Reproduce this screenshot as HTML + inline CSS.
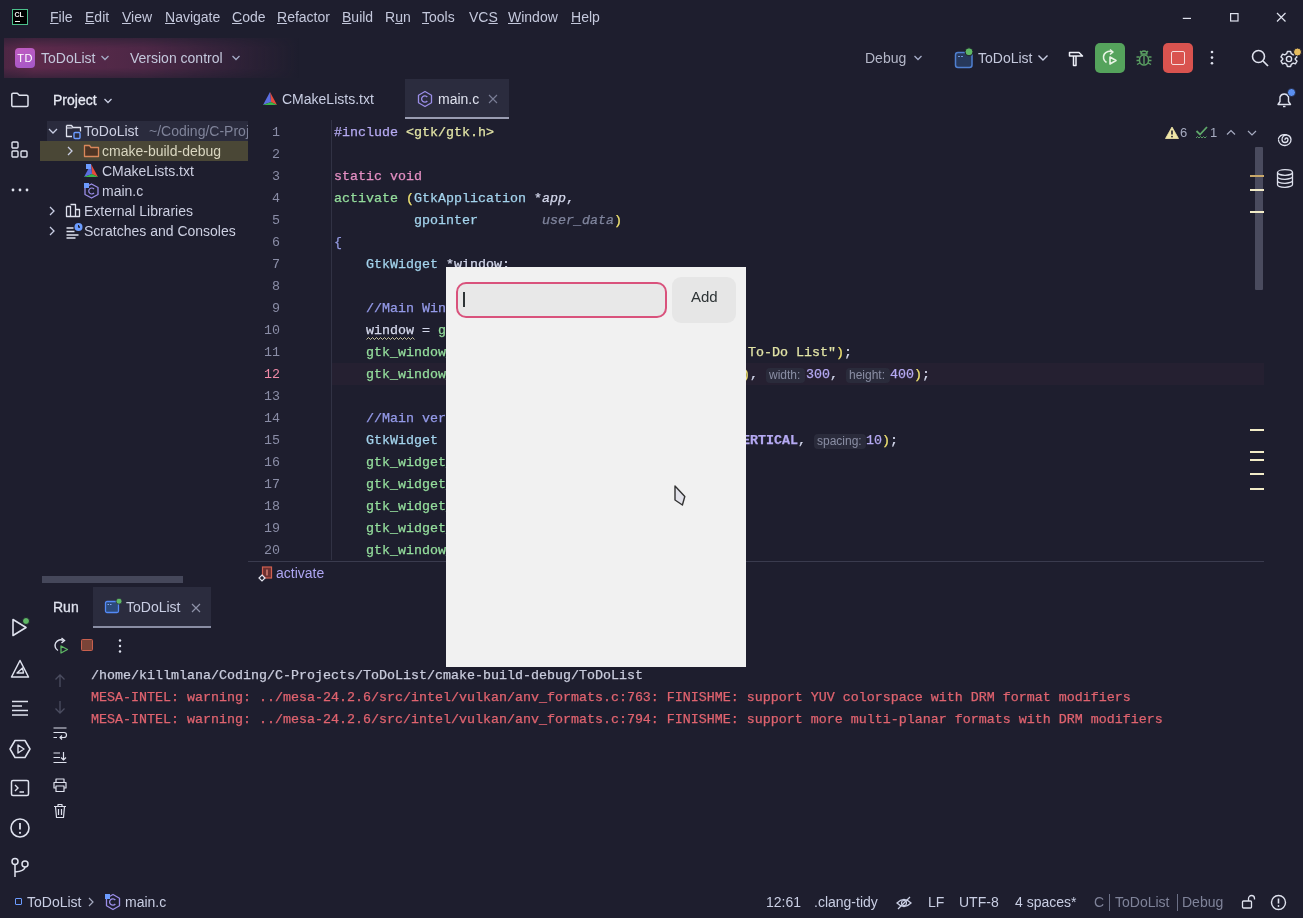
<!DOCTYPE html>
<html><head><meta charset="utf-8">
<style>
*{margin:0;padding:0;box-sizing:border-box}
html,body{width:1303px;height:918px;overflow:hidden;background:#1e1e2e}
body{position:relative;font-family:"Liberation Sans",sans-serif;font-size:14px;color:#c4c8dc}
.a{position:absolute;white-space:pre}
.m{font-family:"Liberation Mono",monospace;font-size:13.33px;-webkit-text-stroke:0.25px currentColor}
.u{text-decoration:underline;text-underline-offset:1px;text-decoration-thickness:1px}
svg{position:absolute;overflow:visible}
</style></head><body><div style="position:absolute;left:0;top:0;width:1303px;height:918px;will-change:transform">

<!-- ===== MENU BAR ===== -->
<div class="a" style="left:12px;top:9px;width:16px;height:16px;background:#000;border:1.3px solid #4cc08c;"></div>
<div class="a" style="left:14.5px;top:10px;font-size:7px;font-weight:bold;color:#f0f0f0;line-height:9px">CL</div>
<div class="a" style="left:15px;top:21px;width:5px;height:1.3px;background:#f0f0f0"></div>

<div id="menu">
<div class="a" style="left:50px;top:9px"><span class="u">F</span>ile</div>
<div class="a" style="left:85px;top:9px"><span class="u">E</span>dit</div>
<div class="a" style="left:122px;top:9px"><span class="u">V</span>iew</div>
<div class="a" style="left:165px;top:9px"><span class="u">N</span>avigate</div>
<div class="a" style="left:232px;top:9px"><span class="u">C</span>ode</div>
<div class="a" style="left:277px;top:9px"><span class="u">R</span>efactor</div>
<div class="a" style="left:342px;top:9px"><span class="u">B</span>uild</div>
<div class="a" style="left:385px;top:9px">R<span class="u">u</span>n</div>
<div class="a" style="left:422px;top:9px"><span class="u">T</span>ools</div>
<div class="a" style="left:469px;top:9px">VC<span class="u">S</span></div>
<div class="a" style="left:508px;top:9px"><span class="u">W</span>indow</div>
<div class="a" style="left:571px;top:9px"><span class="u">H</span>elp</div>
</div>


<!-- ===== TOOLBAR ===== -->
<div class="a" style="left:4px;top:38px;width:320px;height:40px;background:linear-gradient(to right, rgba(135,50,95,0.45) 0px, rgba(135,50,95,0.6) 30px, rgba(125,50,95,0.5) 140px, rgba(100,45,85,0.3) 220px, rgba(30,30,46,0) 295px);-webkit-mask-image:linear-gradient(to bottom, rgba(0,0,0,0.5), #000 25%, #000 75%, rgba(0,0,0,0.5))"></div>
<div class="a" style="left:15px;top:48px;width:20px;height:20px;border-radius:4px;background:linear-gradient(160deg,#c05cc0,#a458c8)"></div>
<div class="a" style="left:15px;top:48px;width:20px;height:20px;line-height:20px;text-align:center;font-size:11px;color:#fff;letter-spacing:0.3px">TD</div>
<div class="a" style="left:41px;top:50px">ToDoList</div>
<svg style="left:100px;top:54px" width="10" height="8"><path d="M1.5 2 L5 5.5 L8.5 2" stroke="#a6adc8" stroke-width="1.3" fill="none"/></svg>
<div class="a" style="left:130px;top:50px">Version control</div>
<svg style="left:231px;top:54px" width="10" height="8"><path d="M1.5 2 L5 5.5 L8.5 2" stroke="#a6adc8" stroke-width="1.3" fill="none"/></svg>

<div class="a" style="left:865px;top:50px;color:#b4b7c8">Debug</div>
<svg style="left:913px;top:54px" width="10" height="8"><path d="M1.5 2 L5 5.5 L8.5 2" stroke="#a6adc8" stroke-width="1.3" fill="none"/></svg>
<svg style="left:954px;top:48px" width="22" height="22"><rect x="1.5" y="4.5" width="16.5" height="15" rx="2.5" fill="#27395c" stroke="#4f7fd0" stroke-width="1.5"/><path d="M4 8.5 h2 M7 8.5 h2" stroke="#6f94d8" stroke-width="1"/><circle cx="15" cy="3.8" r="4" fill="#5fb865" stroke="#1e1e2e" stroke-width="1"/></svg>
<div class="a" style="left:978px;top:50px">ToDoList</div>
<svg style="left:1037px;top:54px" width="12" height="8"><path d="M1.5 1.5 L6 6 L10.5 1.5" stroke="#c9cee3" stroke-width="1.4" fill="none"/></svg>
<svg style="left:1066px;top:49px" width="20" height="20"><path d="M3.5 3.5 H13 L16.5 7 H3.5 Z" stroke="#eef0f8" stroke-width="1.5" fill="none" stroke-linejoin="round"/><path d="M7.5 7 V16.5 H10 V7" stroke="#eef0f8" stroke-width="1.5" fill="none" stroke-linejoin="round"/></svg>
<div class="a" style="left:1095px;top:43px;width:30px;height:30px;border-radius:5px;background:#55a35c"></div>
<svg style="left:1099px;top:47px" width="22" height="22"><path d="M13.5 5 A6 6 0 1 0 7.5 15.5" stroke="#e8f4e4" stroke-width="1.6" fill="none"/><path d="M11 2.5 L14 5 L11 7.5" stroke="#e8f4e4" stroke-width="1.6" fill="none" stroke-linejoin="round"/><path d="M11 10 L17 13.5 L11 17 Z" stroke="#e8f4e4" stroke-width="1.6" fill="none" stroke-linejoin="round"/></svg>
<svg style="left:1134px;top:48px" width="20" height="20"><path d="M7 6 A3 3 0 0 1 13 6 Z" stroke="#5a9e62" stroke-width="1.4" fill="none" stroke-linejoin="round"/><rect x="5.5" y="7" width="9" height="10" rx="4.5" stroke="#5a9e62" stroke-width="1.5" fill="none"/><path d="M10 8 V16 M2.5 9 H5.5 M14.5 9 H17.5 M2.5 12.5 H5.5 M14.5 12.5 H17.5 M3 16.5 L5.8 15 M17 16.5 L14.2 15 M6 3 L7.5 4.5 M14 3 L12.5 4.5" stroke="#5a9e62" stroke-width="1.4" fill="none"/></svg>
<div class="a" style="left:1163px;top:43px;width:30px;height:30px;border-radius:5px;background:#d9534f"></div>
<div class="a" style="left:1171px;top:51px;width:14px;height:14px;border-radius:2px;border:1.6px solid #f6dcdc"></div>
<svg style="left:1208px;top:49px" width="8" height="18"><circle cx="4" cy="3" r="1.3" fill="#dfe2ee"/><circle cx="4" cy="8.6" r="1.3" fill="#dfe2ee"/><circle cx="4" cy="14.2" r="1.3" fill="#dfe2ee"/></svg>
<svg style="left:1250px;top:48px" width="20" height="20"><circle cx="8.5" cy="8.5" r="6" stroke="#dfe2ee" stroke-width="1.6" fill="none"/><path d="M13 13 L18 18" stroke="#dfe2ee" stroke-width="1.7"/></svg>
<svg style="left:1280px;top:49px" width="22" height="22"><g transform="translate(9,10)" stroke="#dfe2ee" stroke-width="1.4" fill="none" stroke-linejoin="round"><path d="M-1.6 -7.5 H1.6 L2.3 -5.3 L4.2 -4.2 L6.4 -4.9 L8 -2.1 L6.3 -0.6 V0.6 L8 2.1 L6.4 4.9 L4.2 4.2 L2.3 5.3 L1.6 7.5 H-1.6 L-2.3 5.3 L-4.2 4.2 L-6.4 4.9 L-8 2.1 L-6.3 0.6 V-0.6 L-8 -2.1 L-6.4 -4.9 L-4.2 -4.2 L-2.3 -5.3 Z"/><circle r="2.6"/></g><circle cx="17.5" cy="3" r="4" fill="#e7bd5e" stroke="#1e1e2e" stroke-width="1"/></svg>

<!-- window controls -->
<svg style="left:1182px;top:10px" width="14" height="14"><path d="M0.8 8.4 H9" stroke="#dfe2ee" stroke-width="1.2"/></svg>
<svg style="left:1229px;top:12px" width="14" height="14"><rect x="1.6" y="1.6" width="7.4" height="7.4" stroke="#dfe2ee" stroke-width="1.2" fill="none"/></svg>
<svg style="left:1276px;top:12px" width="14" height="14"><path d="M1 1 L9.5 9.5 M9.5 1 L1 9.5" stroke="#dfe2ee" stroke-width="1.2"/></svg>


<!-- ===== LEFT STRIP ===== -->
<svg style="left:10px;top:90px" width="20" height="20"><path d="M1.8 4.5 a1.3 1.3 0 0 1 1.3-1.3 h4.2 l2 2 h7.4 a1.3 1.3 0 0 1 1.3 1.3 v8.8 a1.3 1.3 0 0 1 -1.3 1.3 h-13.6 a1.3 1.3 0 0 1 -1.3-1.3 z" stroke="#dfe2ee" stroke-width="1.5" fill="none" stroke-linejoin="round"/></svg>
<svg style="left:10px;top:140px" width="20" height="20"><rect x="2" y="2" width="6" height="6" rx="1" stroke="#dfe2ee" stroke-width="1.4" fill="none"/><rect x="2" y="11" width="6" height="6" rx="1" stroke="#dfe2ee" stroke-width="1.4" fill="none"/><rect x="11" y="11" width="6" height="6" rx="1" stroke="#dfe2ee" stroke-width="1.4" fill="none"/></svg>
<svg style="left:10px;top:180px" width="20" height="20"><circle cx="3" cy="10" r="1.4" fill="#dfe2ee"/><circle cx="10" cy="10" r="1.4" fill="#dfe2ee"/><circle cx="17" cy="10" r="1.4" fill="#dfe2ee"/></svg>

<svg style="left:10px;top:616px" width="22" height="22"><path d="M3 3.5 L16 11.5 L3 19.5 Z" stroke="#dfe2ee" stroke-width="1.6" fill="none" stroke-linejoin="round"/><circle cx="16" cy="5" r="3.5" fill="#5fb865" stroke="#1e1e2e" stroke-width="1"/></svg>
<svg style="left:10px;top:659px" width="20" height="20"><path d="M10 1.5 L18.5 18 H1.5 Z" stroke="#dfe2ee" stroke-width="1.5" fill="none" stroke-linejoin="round"/><path d="M12.5 9 L7 14 H13.5 Z" stroke="#dfe2ee" stroke-width="1.3" fill="none" stroke-linejoin="round"/></svg>
<svg style="left:10px;top:698px" width="20" height="20"><path d="M2 3.5 H18 M2 8 H12 M2 12.5 H18 M2 17 H18" stroke="#dfe2ee" stroke-width="1.5"/></svg>
<svg style="left:9px;top:738px" width="22" height="22"><path d="M6 2.5 H16 L21 11 L16 19.5 H6 L1 11 Z" stroke="#dfe2ee" stroke-width="1.5" fill="none" stroke-linejoin="round"/><path d="M9 7 L15 11 L9 15 Z" stroke="#dfe2ee" stroke-width="1.4" fill="none" stroke-linejoin="round"/></svg>
<svg style="left:10px;top:778px" width="20" height="20"><rect x="1.5" y="2.5" width="17" height="15" rx="1.5" stroke="#dfe2ee" stroke-width="1.5" fill="none"/><path d="M5 7 L8 10 L5 13 M9.5 14 H14" stroke="#dfe2ee" stroke-width="1.4" fill="none"/></svg>
<svg style="left:9px;top:817px" width="22" height="22"><circle cx="11" cy="11" r="9" stroke="#dfe2ee" stroke-width="1.6" fill="none"/><path d="M11 6 V12.5" stroke="#dfe2ee" stroke-width="1.8"/><circle cx="11" cy="15.8" r="1.1" fill="#dfe2ee"/></svg>
<svg style="left:10px;top:857px" width="20" height="22"><circle cx="5" cy="4.5" r="3" stroke="#dfe2ee" stroke-width="1.5" fill="none"/><circle cx="15" cy="7" r="3" stroke="#dfe2ee" stroke-width="1.5" fill="none"/><path d="M5 7.5 V20 M15 10 Q15 14 5 15" stroke="#dfe2ee" stroke-width="1.5" fill="none"/></svg>

<!-- ===== PROJECT PANEL ===== -->
<div class="a" style="left:53px;top:92px;color:#e6e8f2;-webkit-text-stroke:0.3px #e6e8f2">Project</div>
<svg style="left:103px;top:97px" width="10" height="8"><path d="M1.5 2 L5 5.5 L8.5 2" stroke="#c9cee3" stroke-width="1.3" fill="none"/></svg>

<div class="a" style="left:47px;top:121px;width:201px;height:20px;background:#2a2b3d"></div>
<div class="a" style="left:40px;top:141px;width:208px;height:20px;background:#4a4736"></div>

<svg style="left:47px;top:125px" width="12" height="12"><path d="M2 4 L6 8 L10 4" stroke="#c9cee3" stroke-width="1.3" fill="none"/></svg>
<svg style="left:65px;top:123px" width="18" height="18"><path d="M1.5 2.5 h5 l1.5 2 h7.5 v4 M1.5 2.5 v11 h5.5" stroke="#dfe2ee" stroke-width="1.3" fill="none" stroke-linejoin="round"/><path d="M1.5 5 h6" stroke="#dfe2ee" stroke-width="1.1"/><rect x="9" y="9.5" width="6" height="6" rx="1" stroke="#6c9cff" stroke-width="1.4" fill="none"/></svg>
<div class="a" style="left:84px;top:123px;color:#cdd0e2">ToDoList</div>
<div class="a" style="left:149px;top:121px;width:99px;height:20px;overflow:hidden"><div class="a" style="left:0;top:2px;color:#7f8399">~/Coding/C-Projects/ToDoList</div></div>

<svg style="left:64px;top:145px" width="12" height="12"><path d="M4 2 L8 6 L4 10" stroke="#c9cee3" stroke-width="1.3" fill="none"/></svg>
<svg style="left:83px;top:143px" width="18" height="16"><path d="M1.5 2.5 h5 l1.5 2 h7.5 v9 h-14 z" stroke="#d9875a" stroke-width="1.3" fill="#4d3424" stroke-linejoin="round"/></svg>
<div class="a" style="left:102px;top:143px;color:#d9d6c0">cmake-build-debug</div>

<svg style="left:83px;top:163px" width="18" height="16"><path d="M8 1 L15 14 L9 11 Z" fill="#e74b3c"/><path d="M8 1 L1 14 L9 11 Z" fill="#5b6ee1"/><path d="M1 14 L15 14 L9 11 Z" fill="#3cb54a"/><rect x="3" y="1" width="5" height="5" fill="#6c9cff"/></svg>
<div class="a" style="left:102px;top:163px;color:#cdd0e2">CMakeLists.txt</div>

<svg style="left:83px;top:182px" width="18" height="18"><path d="M8.5 2 L15 5.5 V12.5 L8.5 16 L2 12.5 V5.5 Z" stroke="#9b8ee8" stroke-width="1.3" fill="none" stroke-linejoin="round"/><path d="M11 7 A3 3 0 1 0 11 11" stroke="#9b8ee8" stroke-width="1.2" fill="none"/><rect x="1" y="1" width="5" height="5" fill="#6c9cff"/></svg>
<div class="a" style="left:102px;top:183px;color:#cdd0e2">main.c</div>

<svg style="left:46px;top:205px" width="12" height="12"><path d="M4 2 L8 6 L4 10" stroke="#c9cee3" stroke-width="1.3" fill="none"/></svg>
<svg style="left:65px;top:203px" width="18" height="16"><path d="M1.5 3.5 v10 h13 v-7 h-4 M1.5 3.5 h4 v10 M5.5 1.5 h5 v12" stroke="#dfe2ee" stroke-width="1.3" fill="none" stroke-linejoin="round"/></svg>
<div class="a" style="left:84px;top:203px;color:#cdd0e2">External Libraries</div>

<svg style="left:46px;top:225px" width="12" height="12"><path d="M4 2 L8 6 L4 10" stroke="#c9cee3" stroke-width="1.3" fill="none"/></svg>
<svg style="left:65px;top:222px" width="18" height="18"><path d="M1.5 6 h7 M1.5 9.5 h8 M1.5 13 h12 M1.5 16 h9" stroke="#dfe2ee" stroke-width="1.3"/><circle cx="13.5" cy="5" r="4" fill="#6c9cff"/><path d="M13.5 3 v2.3 h1.5" stroke="#1e1e2e" stroke-width="1"/></svg>
<div class="a" style="left:84px;top:223px;color:#cdd0e2">Scratches and Consoles</div>

<div class="a" style="left:42px;top:576px;width:141px;height:7px;background:#45475a;border-radius:0"></div>


<!-- ===== EDITOR TABS ===== -->
<svg style="left:262px;top:91px" width="16" height="16"><path d="M8 1 L15 14 L9 11 Z" fill="#e74b3c"/><path d="M8 1 L1 14 L9 11 Z" fill="#5b6ee1"/><path d="M1 14 L15 14 L9 11 Z" fill="#3cb54a"/></svg>
<div class="a" style="left:282px;top:91px;color:#c9cee3">CMakeLists.txt</div>
<div class="a" style="left:405px;top:79px;width:104px;height:40px;background:#2b2c3e"></div>
<div class="a" style="left:405px;top:117px;width:104px;height:2px;background:#9a9db2"></div>
<svg style="left:416px;top:90px" width="18" height="18"><path d="M9 1.5 L15.5 5.2 V12.8 L9 16.5 L2.5 12.8 V5.2 Z" stroke="#9b8ee8" stroke-width="1.3" fill="none" stroke-linejoin="round"/><path d="M11.3 7 A3.2 3.2 0 1 0 11.3 11" stroke="#9b8ee8" stroke-width="1.3" fill="none"/></svg>
<div class="a" style="left:438px;top:91px;color:#dfe2ee">main.c</div>
<svg style="left:487px;top:93px" width="12" height="12"><path d="M2 2 L10 10 M10 2 L2 10" stroke="#7a7e96" stroke-width="1.1"/></svg>

<!-- ===== EDITOR ===== -->
<div class="a" style="left:332px;top:363px;width:932px;height:22px;background:rgba(60,40,60,0.25)"></div>
<div class="a" style="left:331px;top:120px;width:1px;height:440px;background:#313244"></div>
<div class="a" style="left:248px;top:561px;width:1016px;height:1px;background:#3a3b4e"></div>
<div id="gutter" style="position:absolute;left:0;top:2px">
<div class="a m" style="left:230px;top:120px;width:50px;text-align:right;line-height:22px;-webkit-text-stroke:0;color:#8a8da6">1</div>
<div class="a m" style="left:230px;top:142px;width:50px;text-align:right;line-height:22px;-webkit-text-stroke:0;color:#8a8da6">2</div>
<div class="a m" style="left:230px;top:164px;width:50px;text-align:right;line-height:22px;-webkit-text-stroke:0;color:#8a8da6">3</div>
<div class="a m" style="left:230px;top:186px;width:50px;text-align:right;line-height:22px;-webkit-text-stroke:0;color:#8a8da6">4</div>
<div class="a m" style="left:230px;top:208px;width:50px;text-align:right;line-height:22px;-webkit-text-stroke:0;color:#8a8da6">5</div>
<div class="a m" style="left:230px;top:230px;width:50px;text-align:right;line-height:22px;-webkit-text-stroke:0;color:#8a8da6">6</div>
<div class="a m" style="left:230px;top:252px;width:50px;text-align:right;line-height:22px;-webkit-text-stroke:0;color:#8a8da6">7</div>
<div class="a m" style="left:230px;top:274px;width:50px;text-align:right;line-height:22px;-webkit-text-stroke:0;color:#8a8da6">8</div>
<div class="a m" style="left:230px;top:296px;width:50px;text-align:right;line-height:22px;-webkit-text-stroke:0;color:#8a8da6">9</div>
<div class="a m" style="left:230px;top:318px;width:50px;text-align:right;line-height:22px;-webkit-text-stroke:0;color:#8a8da6">10</div>
<div class="a m" style="left:230px;top:340px;width:50px;text-align:right;line-height:22px;-webkit-text-stroke:0;color:#8a8da6">11</div>
<div class="a m" style="left:230px;top:362px;width:50px;text-align:right;line-height:22px;-webkit-text-stroke:0;color:#f38ba8">12</div>
<div class="a m" style="left:230px;top:384px;width:50px;text-align:right;line-height:22px;-webkit-text-stroke:0;color:#8a8da6">13</div>
<div class="a m" style="left:230px;top:406px;width:50px;text-align:right;line-height:22px;-webkit-text-stroke:0;color:#8a8da6">14</div>
<div class="a m" style="left:230px;top:428px;width:50px;text-align:right;line-height:22px;-webkit-text-stroke:0;color:#8a8da6">15</div>
<div class="a m" style="left:230px;top:450px;width:50px;text-align:right;line-height:22px;-webkit-text-stroke:0;color:#8a8da6">16</div>
<div class="a m" style="left:230px;top:472px;width:50px;text-align:right;line-height:22px;-webkit-text-stroke:0;color:#8a8da6">17</div>
<div class="a m" style="left:230px;top:494px;width:50px;text-align:right;line-height:22px;-webkit-text-stroke:0;color:#8a8da6">18</div>
<div class="a m" style="left:230px;top:516px;width:50px;text-align:right;line-height:22px;-webkit-text-stroke:0;color:#8a8da6">19</div>
<div class="a m" style="left:230px;top:538px;width:50px;text-align:right;line-height:22px;-webkit-text-stroke:0;color:#8a8da6">20</div>
</div>

<div id="code" style="position:absolute;left:0;top:2px">
<div class="a m" style="left:334px;top:120px;line-height:22px"><span style="color:#b4a9f0;">#include</span><span style="color:#d4d8ec;"> </span><span style="color:#e2e4a6;">&lt;gtk/gtk.h&gt;</span></div>
<div class="a m" style="left:334px;top:164px;line-height:22px"><span style="color:#e48fc3;">static</span><span style="color:#d4d8ec;"> </span><span style="color:#e48fc3;">void</span></div>
<div class="a m" style="left:334px;top:186px;line-height:22px"><span style="color:#94dd9c;">activate</span><span style="color:#d4d8ec;"> </span><span style="color:#f0e372;">(</span><span style="color:#a3d3ec;">GtkApplication</span><span style="color:#d4d8ec;"> *</span><span style="color:#d4d8ec;font-style:italic">app</span><span style="color:#d4d8ec;">,</span></div>
<div class="a m" style="left:334px;top:208px;line-height:22px"><span style="color:#d4d8ec;">          </span><span style="color:#a3d3ec;">gpointer</span><span style="color:#d4d8ec;">        </span><span style="color:#7f849c;font-style:italic">user_data</span><span style="color:#f0e372;">)</span></div>
<div class="a m" style="left:334px;top:230px;line-height:22px"><span style="color:#9399e0;">{</span></div>
<div class="a m" style="left:334px;top:252px;line-height:22px"><span style="color:#d4d8ec;">    </span><span style="color:#a3d3ec;">GtkWidget</span><span style="color:#d4d8ec;"> *window;</span></div>
<div class="a m" style="left:334px;top:296px;line-height:22px"><span style="color:#d4d8ec;">    </span><span style="color:#959bea;">//Main Window</span></div>
<div class="a m" style="left:334px;top:318px;line-height:22px"><span style="color:#d4d8ec;">    </span><span style="color:#d4d8ec;">window</span><span style="color:#d4d8ec;"> = </span><span style="color:#94dd9c;">gtk_application_window_new</span></div>
<div class="a m" style="left:334px;top:340px;line-height:22px"><span style="color:#d4d8ec;">    </span><span style="color:#94dd9c;">gtk_window_set_title</span></div>
<div class="a m" style="left:334px;top:362px;line-height:22px"><span style="color:#d4d8ec;">    </span><span style="color:#94dd9c;">gtk_window_set_default_size</span></div>
<div class="a m" style="left:334px;top:406px;line-height:22px"><span style="color:#d4d8ec;">    </span><span style="color:#959bea;">//Main vertical box</span></div>
<div class="a m" style="left:334px;top:428px;line-height:22px"><span style="color:#d4d8ec;">    </span><span style="color:#a3d3ec;">GtkWidget</span><span style="color:#d4d8ec;"> *vbox = gtk_box_new</span></div>
<div class="a m" style="left:334px;top:450px;line-height:22px"><span style="color:#d4d8ec;">    </span><span style="color:#94dd9c;">gtk_widget_set_margin_top</span></div>
<div class="a m" style="left:334px;top:472px;line-height:22px"><span style="color:#d4d8ec;">    </span><span style="color:#94dd9c;">gtk_widget_set_margin_bottom</span></div>
<div class="a m" style="left:334px;top:494px;line-height:22px"><span style="color:#d4d8ec;">    </span><span style="color:#94dd9c;">gtk_widget_set_margin_start</span></div>
<div class="a m" style="left:334px;top:516px;line-height:22px"><span style="color:#d4d8ec;">    </span><span style="color:#94dd9c;">gtk_widget_set_margin_end</span></div>
<div class="a m" style="left:334px;top:538px;line-height:22px"><span style="color:#d4d8ec;">    </span><span style="color:#94dd9c;">gtk_window_set_child</span></div>
<div class="a m" style="left:748px;top:340px;line-height:22px"><span style="color:#e2e4a6;">To-Do List</span><span style="color:#e2e4a6;">"</span><span style="color:#f0e372;">)</span><span style="color:#d4d8ec;">;</span></div>
<div class="a m" style="left:742px;top:362px;line-height:22px"><span style="color:#f0e372;">)</span><span style="color:#d4d8ec;">, </span></div>
<div class="a" style="left:766px;top:366px;width:39px;height:15px;background:#2a2b3b;border-radius:4px"></div>
<div class="a" style="left:769px;top:365px;font-size:12px;color:#8a8ea4;line-height:16px">width:</div>
<div class="a m" style="left:806px;top:362px;line-height:22px"><span style="color:#b5a9f2;">300</span><span style="color:#d4d8ec;">, </span></div>
<div class="a" style="left:846px;top:366px;width:44px;height:15px;background:#2a2b3b;border-radius:4px"></div>
<div class="a" style="left:849px;top:365px;font-size:12px;color:#8a8ea4;line-height:16px">height:</div>
<div class="a m" style="left:890px;top:362px;line-height:22px"><span style="color:#b5a9f2;">400</span><span style="color:#f0e372;">)</span><span style="color:#d4d8ec;">;</span></div>
<div class="a m" style="left:742px;top:428px;line-height:22px"><span style="color:#b5a9f2;font-weight:bold">ERTICAL</span><span style="color:#d4d8ec;">, </span></div>
<div class="a" style="left:814px;top:432px;width:52px;height:15px;background:#2a2b3b;border-radius:4px"></div>
<div class="a" style="left:817px;top:431px;font-size:12px;color:#8a8ea4;line-height:16px">spacing:</div>
<div class="a m" style="left:866px;top:428px;line-height:22px"><span style="color:#b5a9f2;">10</span><span style="color:#f0e372;">)</span><span style="color:#d4d8ec;">;</span></div>
</div>


<!-- ===== RIGHT EDITOR GUTTER / STRIP ===== -->
<svg style="left:1165px;top:126px" width="14" height="13"><path d="M7 1 L13.5 12.5 H0.5 Z" fill="#f0e6a8" stroke="#f0e6a8" stroke-width="0.8" stroke-linejoin="round"/><path d="M7 4.5 V8.5" stroke="#1e1e2e" stroke-width="1.6"/><circle cx="7" cy="10.6" r="0.9" fill="#1e1e2e"/></svg>
<div class="a" style="left:1180px;top:125px;font-size:13px;color:#a6abc0">6</div>
<svg style="left:1195px;top:125px" width="14" height="16"><path d="M1.5 6 L5 9.5 L12 2" stroke="#5fa86a" stroke-width="1.8" fill="none"/><path d="M1 13 l1.5 -1.5 1.5 1.5 1.5 -1.5 1.5 1.5 1.5 -1.5 1.5 1.5 1.5 -1.5" stroke="#5fa86a" stroke-width="0.9" fill="none"/></svg>
<div class="a" style="left:1210px;top:125px;font-size:13px;color:#a6abc0">1</div>
<svg style="left:1225px;top:128px" width="12" height="10"><path d="M2 6.5 L6 2.5 L10 6.5" stroke="#a6abc0" stroke-width="1.2" fill="none"/></svg>
<svg style="left:1246px;top:128px" width="12" height="10"><path d="M2 3 L6 7 L10 3" stroke="#a6abc0" stroke-width="1.2" fill="none"/></svg>

<div class="a" style="left:1255px;top:147px;width:8px;height:143px;background:#4a4b5e;border-radius:1px"></div>
<div class="a" style="left:1250px;top:175px;width:14px;height:2px;background:#c9a86a"></div>
<div class="a" style="left:1250px;top:189px;width:14px;height:2px;background:#f2ecc8"></div>
<div class="a" style="left:1250px;top:211px;width:14px;height:2px;background:#f2ecc8"></div>
<div class="a" style="left:1250px;top:429px;width:14px;height:2px;background:#f2ecc8"></div>
<div class="a" style="left:1250px;top:451px;width:14px;height:2px;background:#f2ecc8"></div>
<div class="a" style="left:1250px;top:459px;width:14px;height:2px;background:#f2ecc8"></div>
<div class="a" style="left:1250px;top:473px;width:14px;height:2px;background:#f2ecc8"></div>
<div class="a" style="left:1250px;top:488px;width:14px;height:2px;background:#f2ecc8"></div>

<svg style="left:1275px;top:89px" width="20" height="20"><path d="M3 15.5 H15.5 L13.5 12.5 V8 A4.5 4.5 0 0 0 5 8 V12.5 Z" stroke="#dfe2ee" stroke-width="1.4" fill="none" stroke-linejoin="round"/><path d="M8 17.5 h2.5" stroke="#dfe2ee" stroke-width="1.4"/><circle cx="16.5" cy="3.5" r="4" fill="#5b8ff0" stroke="#1e1e2e" stroke-width="0.8"/></svg>
<svg style="left:1275px;top:129px" width="20" height="20"><path d="M10 10.5 a1.5 1.5 0 0 1 3 0 a3 3 0 0 1 -6 0 a4.5 4.5 0 0 1 9 0 a6 5.5 0 0 1 -12.5 0.5 M16 10.5 a6.5 6 0 0 0 -12.5 -1" stroke="#dfe2ee" stroke-width="1.3" fill="none" stroke-linecap="round"/></svg>
<svg style="left:1275px;top:168px" width="20" height="22"><ellipse cx="10" cy="4.5" rx="7.5" ry="2.8" stroke="#dfe2ee" stroke-width="1.3" fill="none"/><path d="M2.5 4.5 V16.5 A7.5 2.8 0 0 0 17.5 16.5 V4.5 M2.5 8.5 A7.5 2.8 0 0 0 17.5 8.5 M2.5 12.5 A7.5 2.8 0 0 0 17.5 12.5" stroke="#dfe2ee" stroke-width="1.3" fill="none"/></svg>

<svg style="left:366px;top:337px" width="50" height="4"><polyline points="0.5,2.5 2.5,0.5 4.5,2.5 6.5,0.5 8.5,2.5 10.5,0.5 12.5,2.5 14.5,0.5 16.5,2.5 18.5,0.5 20.5,2.5 22.5,0.5 24.5,2.5 26.5,0.5 28.5,2.5 30.5,0.5 32.5,2.5 34.5,0.5 36.5,2.5 38.5,0.5 40.5,2.5 42.5,0.5 44.5,2.5 46.5,0.5 48.5,2.5" stroke="#ddd9ac" stroke-width="0.9" fill="none"/></svg>
<!-- breadcrumb -->
<svg style="left:258px;top:565px" width="16" height="16"><rect x="4.5" y="2" width="9" height="11" fill="#6b3030" stroke="#d06050" stroke-width="1.2"/><path d="M9 4.5 v6" stroke="#e89080" stroke-width="1.2"/><path d="M4 10 L7 13 L4 16 L1 13 Z" fill="#1e1e2e" stroke="#e6e6f0" stroke-width="1.2"/></svg>
<div class="a" style="left:276px;top:565px;color:#aea6f2;font-size:14px">activate</div>

<!-- ===== RUN PANEL ===== -->
<div class="a" style="left:53px;top:599px;color:#dfe2ee;-webkit-text-stroke:0.3px #dfe2ee">Run</div>
<div class="a" style="left:93px;top:587px;width:118px;height:41px;background:#2b2c3e"></div>
<div class="a" style="left:93px;top:626px;width:118px;height:2px;background:#8a8ea4"></div>
<svg style="left:104px;top:598px" width="20" height="18"><rect x="1.5" y="3.5" width="13" height="11" rx="1.5" fill="#2c4a7a" stroke="#548af7" stroke-width="1.3"/><path d="M3.5 6.5 h1.5 M6 6.5 h1.5" stroke="#8fb4ff" stroke-width="0.9"/><circle cx="15" cy="3.2" r="3" fill="#5fb865" stroke="#2b2c3e" stroke-width="0.8"/></svg>
<div class="a" style="left:126px;top:599px;color:#c9cee3">ToDoList</div>
<svg style="left:190px;top:602px" width="12" height="12"><path d="M2 2 L10 10 M10 2 L2 10" stroke="#8e92a8" stroke-width="1.2"/></svg>

<svg style="left:52px;top:637px" width="18" height="18"><path d="M11.5 3.5 A5.5 5.5 0 1 0 6 13.5" stroke="#dfe2ee" stroke-width="1.4" fill="none"/><path d="M9.5 1 L12.5 3.5 L9.5 6" stroke="#dfe2ee" stroke-width="1.4" fill="none"/><path d="M9 9 L15.5 12.5 L9 16 Z" stroke="#5fb865" stroke-width="1.3" fill="none" stroke-linejoin="round"/></svg>
<div class="a" style="left:81px;top:639px;width:12px;height:12px;background:#7a4438;border:1.3px solid #c8604e;border-radius:1.5px"></div>
<svg style="left:116px;top:638px" width="8" height="16"><circle cx="4" cy="2.5" r="1.2" fill="#dfe2ee"/><circle cx="4" cy="8" r="1.2" fill="#dfe2ee"/><circle cx="4" cy="13.5" r="1.2" fill="#dfe2ee"/></svg>

<svg style="left:53px;top:673px" width="14" height="16"><path d="M7 2 V14 M2.5 6.5 L7 2 L11.5 6.5" stroke="#4b4d60" stroke-width="1.3" fill="none"/></svg>
<svg style="left:53px;top:699px" width="14" height="16"><path d="M7 2 V14 M2.5 9.5 L7 14 L11.5 9.5" stroke="#4b4d60" stroke-width="1.3" fill="none"/></svg>
<svg style="left:52px;top:725px" width="16" height="16"><path d="M1.5 3 H14.5 M1.5 7.5 H12 A2.5 2.5 0 0 1 12 12.5 H8 M1.5 12.5 H5 M10 10.5 L8 12.5 L10 14.5" stroke="#dfe2ee" stroke-width="1.2" fill="none"/></svg>
<svg style="left:52px;top:750px" width="16" height="16"><path d="M1.5 3 H8 M1.5 7.5 H8 M1.5 12.5 H14.5 M11.5 2 V10 M9 7.5 L11.5 10 L14 7.5" stroke="#dfe2ee" stroke-width="1.2" fill="none"/></svg>
<svg style="left:52px;top:777px" width="16" height="16"><path d="M4 5.5 V2 H12 V5.5 M4 11 H2 V5.5 H14 V11 H12 M4 9 H12 V14.5 H4 Z" stroke="#dfe2ee" stroke-width="1.2" fill="none" stroke-linejoin="round"/></svg>
<svg style="left:52px;top:803px" width="16" height="16"><path d="M2 3.5 H14 M6 3.5 V1.5 H10 V3.5 M3.5 3.5 L4.5 14.5 H11.5 L12.5 3.5 M6.5 6 V12 M9.5 6 V12" stroke="#dfe2ee" stroke-width="1.2" fill="none" stroke-linejoin="round"/></svg>

<div class="a m" style="left:91px;top:665px;line-height:22px;color:#c9ccdd">/home/killmlana/Coding/C-Projects/ToDoList/cmake-build-debug/ToDoList</div>
<div class="a m" style="left:91px;top:687px;line-height:22px;color:#e0636f">MESA-INTEL: warning: ../mesa-24.2.6/src/intel/vulkan/anv_formats.c:763: FINISHME: support YUV colorspace with DRM format modifiers</div>
<div class="a m" style="left:91px;top:709px;line-height:22px;color:#e0636f">MESA-INTEL: warning: ../mesa-24.2.6/src/intel/vulkan/anv_formats.c:794: FINISHME: support more multi-planar formats with DRM modifiers</div>

<!-- ===== STATUS BAR ===== -->
<div class="a" style="left:15px;top:898px;width:7px;height:7px;border:1.3px solid #6c9cff;border-radius:1px"></div>
<div class="a" style="left:27px;top:894px;color:#c9cee3">ToDoList</div>
<svg style="left:86px;top:896px" width="10" height="12"><path d="M3 2 L7 6 L3 10" stroke="#a6abc0" stroke-width="1.2" fill="none"/></svg>
<svg style="left:104px;top:893px" width="18" height="18"><path d="M9 1.5 L15.5 5.2 V12.8 L9 16.5 L2.5 12.8 V5.2 Z" stroke="#9b8ee8" stroke-width="1.3" fill="none" stroke-linejoin="round"/><path d="M11.3 7 A3.2 3.2 0 1 0 11.3 11" stroke="#9b8ee8" stroke-width="1.3" fill="none"/><rect x="1" y="1" width="5" height="5" fill="#6c9cff"/></svg>
<div class="a" style="left:125px;top:894px;color:#c9cee3">main.c</div>

<div class="a" style="left:766px;top:894px;color:#c9cee3">12:61</div>
<div class="a" style="left:814px;top:894px;color:#c9cee3">.clang-tidy</div>
<svg style="left:895px;top:894px" width="18" height="18"><path d="M2 9 Q9 2 16 9 Q9 16 2 9 Z" stroke="#c9cee3" stroke-width="1.3" fill="none"/><circle cx="9" cy="9" r="2.5" stroke="#c9cee3" stroke-width="1.2" fill="none"/><path d="M3 15 L15 3" stroke="#c9cee3" stroke-width="1.3"/></svg>
<div class="a" style="left:928px;top:894px;color:#c9cee3">LF</div>
<div class="a" style="left:959px;top:894px;color:#c9cee3">UTF-8</div>
<div class="a" style="left:1015px;top:894px;color:#c9cee3">4 spaces*</div>
<div class="a" style="left:1094px;top:894px;color:#7f8399">C</div>
<div class="a" style="left:1109px;top:894px;width:1px;height:17px;background:#6c7086"></div>
<div class="a" style="left:1115px;top:894px;color:#7f8399">ToDoList</div>
<div class="a" style="left:1177px;top:894px;width:1px;height:17px;background:#6c7086"></div>
<div class="a" style="left:1182px;top:894px;color:#7f8399">Debug</div>
<svg style="left:1241px;top:894px" width="16" height="16"><rect x="1.5" y="7" width="9" height="7" rx="1" stroke="#dfe2ee" stroke-width="1.3" fill="none"/><path d="M7.5 7 V4.5 A3 3 0 0 1 13.5 4.5 V5.5" stroke="#dfe2ee" stroke-width="1.3" fill="none"/></svg>
<svg style="left:1270px;top:894px" width="17" height="17"><circle cx="8.5" cy="8.5" r="7" stroke="#dfe2ee" stroke-width="1.4" fill="none"/><path d="M8.5 4.5 V9.5" stroke="#dfe2ee" stroke-width="1.6"/><circle cx="8.5" cy="12" r="0.9" fill="#dfe2ee"/></svg>

<!-- ===== GTK WINDOW ===== -->
<div class="a" style="left:446px;top:267px;width:300px;height:400px;background:#f1f1f1"></div>
<div class="a" style="left:456px;top:282px;width:211px;height:36px;border:2px solid #d9527c;border-radius:10px;background:#e8e8e8"></div>
<div class="a" style="left:463px;top:292px;width:1.5px;height:15px;background:#2e3436"></div>
<div class="a" style="left:672px;top:277px;width:64px;height:46px;border-radius:9px;background:#e6e6e6"></div>
<div class="a" style="left:691px;top:288px;font-size:15px;color:#2e3436">Add</div>
<svg style="left:670px;top:482px" width="22" height="28"><path d="M5 4 L14.8 14.5 L12.4 23 L5 18 Z" fill="#e2e2ea" stroke="#333" stroke-width="1.4" stroke-linejoin="round"/></svg>

</div></body></html>
